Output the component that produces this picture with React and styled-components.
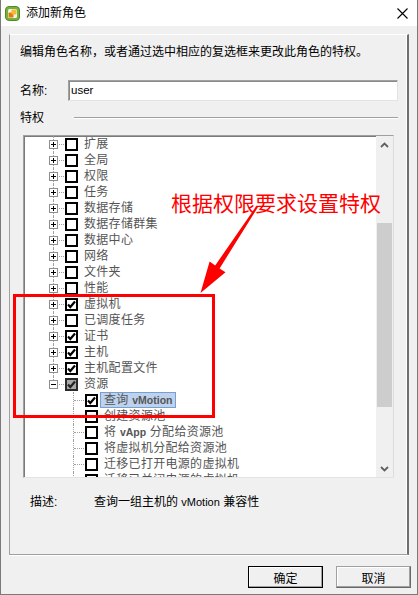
import React from "react";
import styled, { createGlobalStyle, css } from "styled-components";

const GlobalStyle = createGlobalStyle`
  html, body { margin: 0; padding: 0; background: #f0f0f0; }
  body {
    font-family: "Liberation Sans", "Noto Sans CJK SC", sans-serif;
    font-size: 12px;
    color: #000;
  }
  * { box-sizing: border-box; }
`;

const Window = styled.div`
  position: relative;
  width: 418px;
  height: 595px;
  display: flex;
  flex-direction: column;
  background: #f0f0f0;
  border: 1px solid #7a7a7a;
  border-top: none;
  overflow: hidden;
`;

const TitleBar = styled.div`
  height: 26px;
  flex: none;
  background: #fff;
  display: flex;
  align-items: center;
  padding: 0 9px 0 4px;
  gap: 6px;
`;

const TitleText = styled.span`
  font-size: 12px;
  line-height: 16px;
  color: #000;
  flex: 1;
`;

const Body = styled.div`
  flex: 1;
  display: flex;
  flex-direction: column;
  padding: 8px 6px 6px 8px;
`;

const Panel = styled.div`
  height: 521px;
  flex: none;
  margin-right: 2px;
  display: flex;
  flex-direction: column;
  padding: 0 9px 0 10px;
  border-top: 1px solid #fff;
  border-left: 1px solid #a0a0a0;
  border-bottom: 1px solid #a0a0a0;
  border-right: 2px solid #6e6e6e;
  box-shadow: inset -1px 0 0 #fff, 0 1px 0 #fff;
`;

const Intro = styled.div`
  margin-top: 9px;
  line-height: 16px;
  white-space: nowrap;
`;

const FieldRow = styled.div`
  margin-top: 20px;
  height: 21px;
  display: flex;
  align-items: center;
`;

const FieldLabel = styled.span`
  width: ${(p) => p.$w}px;
  flex: none;
  line-height: 16px;
`;

const TextInput = styled.div`
  flex: 1;
  height: 21px;
  background: #fff;
  border-style: solid;
  border-width: 1px;
  border-color: #a0a0a0 #e3e3e3 #e3e3e3 #a0a0a0;
  box-shadow: inset 1px 1px 0 #8a8a8a;
  padding: 0 2px;
  font-size: 11.5px;
  line-height: 19px;
`;

const SectionHeader = styled.div`
  margin-top: 9px;
  height: 16px;
  display: flex;
  align-items: center;
`;

const Rule = styled.div`
  flex: 1;
  height: 2px;
  border-top: 1px solid #a0a0a0;
  border-bottom: 1px solid #fff;
`;

const TreeBox = styled.div`
  margin: 9px 4px 0 3px;
  height: 343px;
  flex: none;
  display: flex;
  background: #fff;
  border-style: solid;
  border-width: 1px;
  border-color: #a0a0a0 #dcdcdc #e3e3e3 #a0a0a0;
  box-shadow: inset 1px 1px 0 #7a7a7a;
`;

const TreeList = styled.div`
  flex: 1;
  overflow: hidden;
`;

const Row = styled.div`
  height: 16px;
  display: flex;
  align-items: center;
  padding-left: ${(p) => 20 + p.$level * 20}px;
  white-space: nowrap;
`;

const Connector = styled.div`
  position: relative;
  width: 20px;
  height: 16px;
  flex: none;
  &::before {
    content: "";
    position: absolute;
    left: 9px;
    top: 0;
    bottom: ${(p) => (p.$last ? "8px" : "0")};
    border-left: 1px dotted #a0a0a0;
  }
  &::after {
    content: "";
    position: absolute;
    left: 10px;
    top: 8px;
    width: 10px;
    border-top: 1px dotted #a0a0a0;
  }
`;

const Expander = styled.div`
  position: absolute;
  left: 5px;
  top: 4px;
  width: 9px;
  height: 9px;
  background: #fff;
  border: 1px solid #8f8f8f;
  z-index: 1;
  &::before {
    content: "";
    position: absolute;
    left: 1px;
    top: 3px;
    width: 5px;
    height: 1px;
    background: #000;
  }
  ${(p) =>
    p.$open
      ? ""
      : css`
          &::after {
            content: "";
            position: absolute;
            left: 3px;
            top: 1px;
            width: 1px;
            height: 5px;
            background: #000;
          }
        `}
`;

const Check = styled.div`
  width: 13px;
  height: 13px;
  flex: none;
  margin-left: 1px;
  border: 2px solid ${(p) => (p.$partial ? "#2a2a2a" : "#000")};
  background: ${(p) => (p.$partial ? "#a9a9a9" : "#fff")};
  display: flex;
  align-items: center;
  justify-content: center;
`;

const Label = styled.span`
  margin-left: ${(p) => (p.$selected ? 2 : 5)}px;
  height: 16px;
  line-height: 14px;
  padding: 0 ${(p) => (p.$selected ? 3 : 0)}px;
  border: 1px solid ${(p) => (p.$selected ? "#7a9fcf" : "transparent")};
  background: ${(p) => (p.$selected ? "#bcd2ee" : "transparent")};
  color: #555;
  font-size: 12px;
  letter-spacing: 0.3px;
`;

const Latin = styled.span`
  font-family: "Liberation Sans", sans-serif;
  font-size: 10.5px;
  font-weight: bold;
  letter-spacing: 0;
`;

const ScrollBar = styled.div`
  width: 17px;
  flex: none;
  display: flex;
  flex-direction: column;
  background: #f0f0f0;
`;

const ScrollArrow = styled.div`
  height: 17px;
  flex: none;
  display: flex;
  align-items: center;
  justify-content: center;
`;

const ScrollTrack = styled.div`
  flex: 1;
  display: flex;
  flex-direction: column;
  align-items: center;
`;

const Thumb = styled.div`
  width: 15px;
  background: #cdcdcd;
  margin-top: ${(p) => p.$offset}px;
  height: ${(p) => p.$size}px;
`;

const DescRow = styled.div`
  margin-top: 16px;
  height: 16px;
  display: flex;
  align-items: center;
  padding-left: 10px;
  line-height: 16px;
`;

const DescValue = styled.span`
  white-space: nowrap;
`;

const DescLatin = styled.span`
  font-size: 11px;
`;

const ButtonRow = styled.div`
  margin-top: 11px;
  height: 22px;
  display: flex;
  justify-content: flex-end;
  gap: 13px;
`;

const Button = styled.button`
  width: 75px;
  height: 22px;
  padding: 0;
  font-family: "Liberation Sans", "Noto Sans CJK SC", sans-serif;
  font-size: 12px;
  color: #000;
  background: #f0f0f0;
  border: 1px solid ${(p) => (p.$default ? "#000" : "#a0a0a0")};
  border-right-color: ${(p) => (p.$default ? "#000" : "#696969")};
  border-bottom-color: ${(p) => (p.$default ? "#000" : "#696969")};
  box-shadow: inset -1px -1px 0 #a0a0a0, inset 1px 1px 0 #fff;
`;

const Annotation = styled.div`
  position: absolute;
  left: 170px;
  top: 190px;
  font-family: "Noto Sans CJK SC", sans-serif;
  font-size: 21px;
  line-height: 24px;
  color: #ff0000;
  white-space: nowrap;
`;

const HighlightBox = styled.div`
  position: absolute;
  left: 12px;
  top: 294px;
  width: 202px;
  height: 124px;
  border: 3px solid #ff0000;
  pointer-events: none;
`;

const Overlay = styled.svg`
  position: absolute;
  left: 0;
  top: 0;
  pointer-events: none;
`;

const AppIcon = () => (
  <svg width="15" height="15" viewBox="0 0 15 15">
    <rect x="0.5" y="0.5" width="14" height="14" rx="3.5" fill="#79b03b" stroke="#4e8a26" />
    <rect x="3" y="3" width="9" height="9" rx="1.5" fill="#eef6e2" />
    <rect x="3.5" y="6.5" width="5" height="5" rx="0.8" fill="#e07a10" />
    <rect x="6.5" y="3.5" width="5" height="5" rx="0.8" fill="#f6b73c" />
  </svg>
);

const CloseIcon = () => (
  <svg width="11" height="11" viewBox="0 0 11 11">
    <path d="M0.5 0.5 L10.5 10.5 M10.5 0.5 L0.5 10.5" stroke="#000" strokeWidth="1.1" />
  </svg>
);

const CheckMark = ({ color = "#000" }) => (
  <svg width="9" height="9" viewBox="0 0 9 9">
    <polyline points="1,4.5 3.3,7 8,1.5" fill="none" stroke={color} strokeWidth="2.2" />
  </svg>
);

const Chevron = ({ up }) => (
  <svg width="9" height="6" viewBox="0 0 9 6">
    <polyline
      points={up ? "1,5 4.5,1.5 8,5" : "1,1 4.5,4.5 8,1"}
      fill="none"
      stroke="#606060"
      strokeWidth="1.8"
    />
  </svg>
);

const items = [
  { label: "扩展", level: 0 },
  { label: "全局", level: 0 },
  { label: "权限", level: 0 },
  { label: "任务", level: 0 },
  { label: "数据存储", level: 0 },
  { label: "数据存储群集", level: 0 },
  { label: "数据中心", level: 0 },
  { label: "网络", level: 0 },
  { label: "文件夹", level: 0 },
  { label: "性能", level: 0 },
  { label: "虚拟机", level: 0, checked: true },
  { label: "已调度任务", level: 0 },
  { label: "证书", level: 0, checked: true },
  { label: "主机", level: 0, checked: true },
  { label: "主机配置文件", level: 0, checked: true },
  { label: "资源", level: 0, checked: true, partial: true, open: true, last: true },
  { label: ["查询 ", "vMotion"], level: 1, checked: true, selected: true },
  { label: "创建资源池", level: 1 },
  { label: ["将 ", "vApp", " 分配给资源池"], level: 1 },
  { label: "将虚拟机分配给资源池", level: 1 },
  { label: "迁移已打开电源的虚拟机", level: 1 },
  { label: "迁移已关闭电源的虚拟机", level: 1 },
];

const renderLabel = (label) =>
  Array.isArray(label)
    ? label.map((part, i) =>
        /^[A-Za-z]+$/.test(part) ? <Latin key={i}>{part}</Latin> : <React.Fragment key={i}>{part}</React.Fragment>
      )
    : label;

export default function App() {
  return (
    <>
      <GlobalStyle />
      <Window>
        <TitleBar>
          <AppIcon />
          <TitleText>添加新角色</TitleText>
          <CloseIcon />
        </TitleBar>
        <Body>
          <Panel>
            <Intro>编辑角色名称，或者通过选中相应的复选框来更改此角色的特权。</Intro>
            <FieldRow>
              <FieldLabel $w={48}>名称:</FieldLabel>
              <TextInput>user</TextInput>
            </FieldRow>
            <SectionHeader>
              <FieldLabel $w={54}>特权</FieldLabel>
              <Rule />
            </SectionHeader>
            <TreeBox>
              <TreeList>
                {items.map((it, i) => (
                  <Row key={i} $level={it.level}>
                    <Connector $last={it.last}>
                      {it.level === 0 && <Expander $open={it.open} />}
                    </Connector>
                    <Check $partial={it.partial}>
                      {it.checked && <CheckMark color={it.partial ? "#222" : "#000"} />}
                    </Check>
                    <Label $selected={it.selected}>{renderLabel(it.label)}</Label>
                  </Row>
                ))}
              </TreeList>
              <ScrollBar>
                <ScrollArrow>
                  <Chevron up />
                </ScrollArrow>
                <ScrollTrack>
                  <Thumb $offset={70} $size={184} />
                </ScrollTrack>
                <ScrollArrow>
                  <Chevron />
                </ScrollArrow>
              </ScrollBar>
            </TreeBox>
            <DescRow>
              <FieldLabel $w={64}>描述:</FieldLabel>
              <DescValue>
                查询一组主机的 <DescLatin>vMotion</DescLatin> 兼容性
              </DescValue>
            </DescRow>
          </Panel>
          <ButtonRow>
            <Button $default>确定</Button>
            <Button>取消</Button>
          </ButtonRow>
        </Body>
        <Annotation>根据权限要求设置特权</Annotation>
        <HighlightBox />
        <Overlay width="418" height="595" viewBox="0 0 418 595">
          <polygon
            points="255.3,206 257,207 218.6,268.4 224.5,272.2 199.5,293 208.6,261.6 214.2,265.5"
            fill="#ff0000"
          />
        </Overlay>
      </Window>
    </>
  );
}
